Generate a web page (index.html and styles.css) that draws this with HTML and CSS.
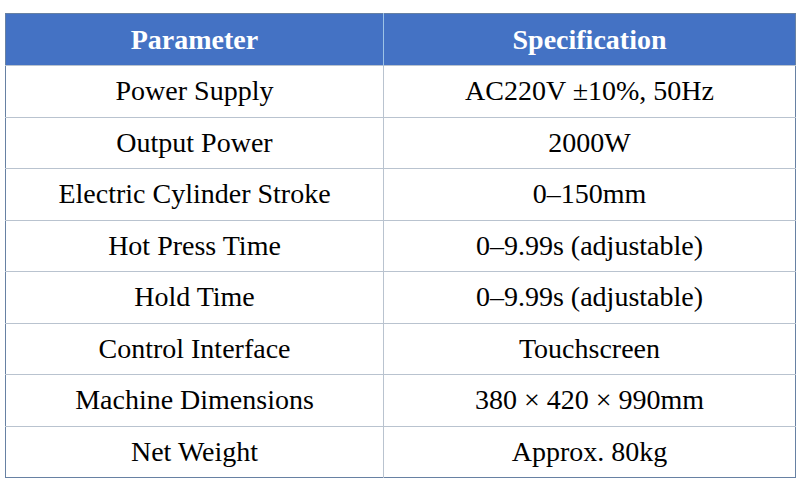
FILE: index.html
```html
<!DOCTYPE html>
<html>
<head>
<meta charset="utf-8">
<link rel="stylesheet" href="styles.css">
</head>
<body>
<div class="wrap">
<table class="spec">
<colgroup><col class="c1"><col class="c2"></colgroup>
<thead>
<tr><th>Parameter</th><th>Specification</th></tr>
</thead>
<tbody>
<tr><td>Power Supply</td><td>AC220V ±10%, 50Hz</td></tr>
<tr><td>Output Power</td><td>2000W</td></tr>
<tr><td>Electric Cylinder Stroke</td><td>0–150mm</td></tr>
<tr><td>Hot Press Time</td><td>0–9.99s (adjustable)</td></tr>
<tr><td>Hold Time</td><td>0–9.99s (adjustable)</td></tr>
<tr><td>Control Interface</td><td>Touchscreen</td></tr>
<tr><td>Machine Dimensions</td><td>380 × 420 × 990mm</td></tr>
<tr><td>Net Weight</td><td>Approx. 80kg</td></tr>
</tbody>
</table>
</div>
</body>
</html>
```
FILE: styles.css
```css
html, body {
  margin: 0;
  padding: 0;
  background: #ffffff;
}
.wrap {
  padding: 13px 0 0 5px;
}
.spec {
  border-collapse: collapse;
  width: 790px;
  table-layout: fixed;
  color: #000;
  border: 1px solid #6781a3;
}
.c1 { width: 378px; }
.c2 { width: 412px; }
.spec th,
.spec td {
  font-family: "Liberation Serif", "Times New Roman", serif;
  font-size: 28px;
  line-height: 32px;
  padding: 0;
  text-align: center;
}
.spec th {
  background: #4472c4;
  color: #ffffff;
  font-weight: bold;
  height: 51px;
  border: none;
}
.spec th + th {
  border-left: 1px solid #9dc3e6;
}
.spec td {
  height: 50.5px;
  border-top: 1px solid #b9c3cf;
}
.spec td + td {
  border-left: 1px solid #b9c3cf;
}
```
